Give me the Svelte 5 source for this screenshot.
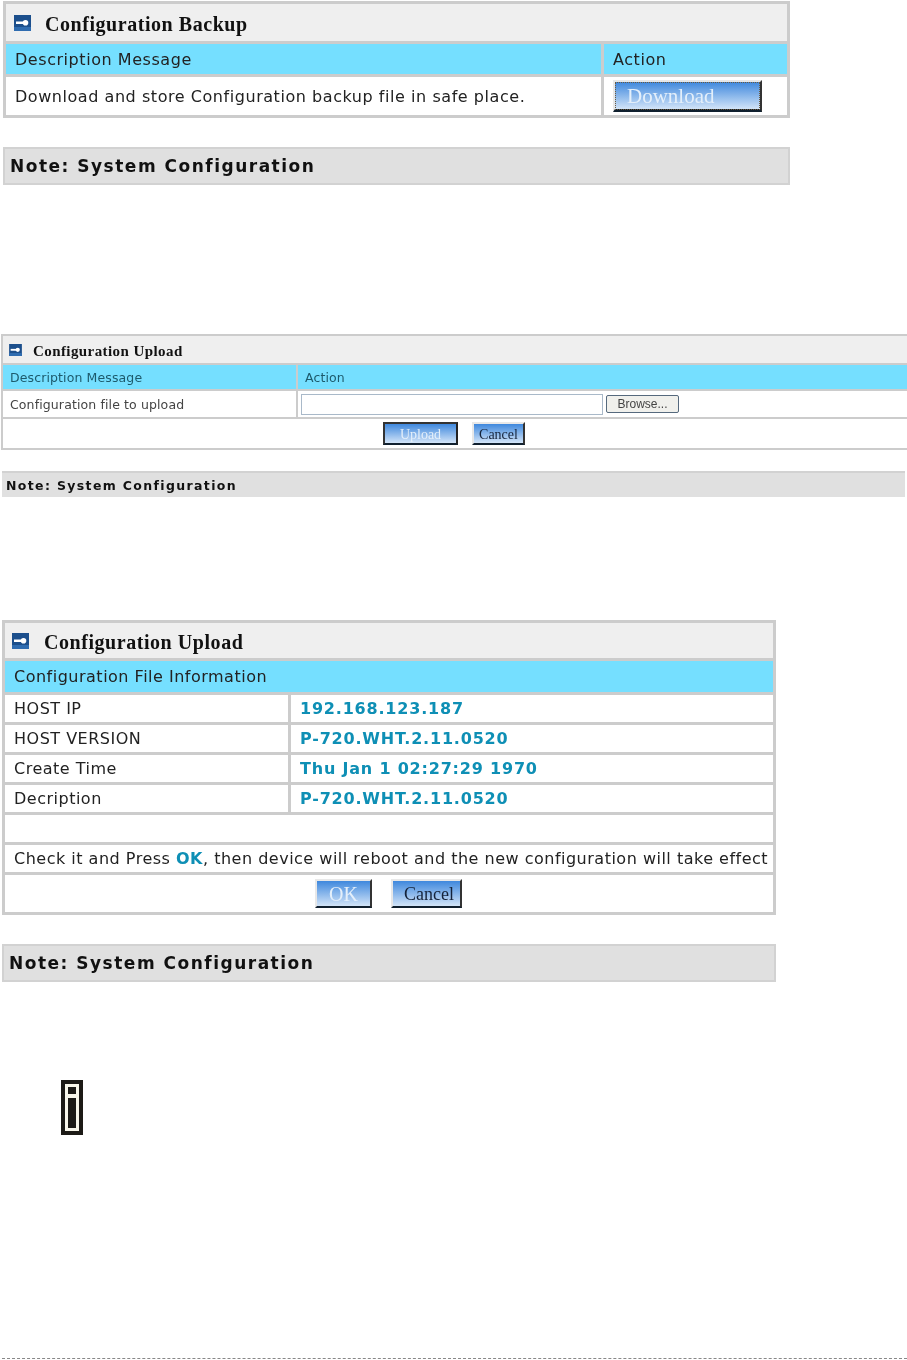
<script>
    const rows = [
        ['HOST IP', '192.168.123.187'],
        ['HOST VERSION', 'P-720.WHT.2.11.0520'],
        ['Create Time', 'Thu Jan 1 02:27:29 1970'],
        ['Decription', 'P-720.WHT.2.11.0520'],
    ];
</script>

{#snippet panelIcon()}
    <svg class="key" viewBox="0 0 17 16" aria-hidden="true">
        <rect width="17" height="16" fill="#1c4f8c"/>
        <rect x="2" y="6.5" width="8" height="2.5" fill="#fff"/>
        <circle cx="11.5" cy="7.7" r="2.8" fill="#fff"/>
        <rect y="12" width="17" height="4" fill="#2f6cb0"/>
    </svg>
{/snippet}

<div class="page">
    <section class="panel backup">
        <div class="title">{@render panelIcon()}<span>Configuration Backup</span></div>
        <div class="split">
            <div class="head">Description Message</div>
            <div class="head">Action</div>
            <div class="cell">Download and store Configuration backup file in safe place.</div>
            <div class="cell"><button class="blue download">Download</button></div>
        </div>
    </section>
    <div class="note backup-note">Note: System Configuration</div>

    <div class="shot">
        <section class="panel upload">
            <div class="title">{@render panelIcon()}<span>Configuration Upload</span></div>
            <div class="split">
                <div class="head">Description Message</div>
                <div class="head">Action</div>
                <div class="cell">Configuration file to upload</div>
                <div class="cell file">
                    <div class="field"></div>
                    <button class="browse">Browse...</button>
                </div>
            </div>
            <div class="actions">
                <button class="blue up">Upload</button>
                <button class="blue can dark">Cancel</button>
            </div>
        </section>
        <div class="note upload-note">Note: System Configuration</div>
    </div>

    <section class="panel info">
        <div class="title">{@render panelIcon()}<span>Configuration Upload</span></div>
        <div class="head wide">Configuration File Information</div>
        <div class="split">
            {#each rows as row}
                <div class="cell">{row[0]}</div>
                <div class="cell val">{row[1]}</div>
            {/each}
        </div>
        <div class="cell blank"></div>
        <div class="cell msg">Check it and Press <b>OK</b>, then device will reboot and the new configuration will take effect</div>
        <div class="actions">
            <button class="blue ok">OK</button>
            <button class="blue can2 dark">Cancel</button>
        </div>
    </section>
    <div class="note info-note">Note: System Configuration</div>

    <svg class="info-icon" viewBox="0 0 22 55" aria-hidden="true">
        <rect x="2" y="2" width="18" height="51" fill="#f8f6ea" stroke="#1c1a16" stroke-width="4"/>
        <rect x="7" y="7" width="8" height="7" fill="#1c1a16"/>
        <rect x="7" y="18" width="8" height="30" fill="#1c1a16"/>
    </svg>

    <div class="rule"></div>
</div>

<style>
:global(body){
    background: #fff;
}
.page{
    height: 1360px;
    padding-top: 1px;
    box-sizing: border-box;
    font-family: "DejaVu Sans", sans-serif;
    color: #222;
    overflow: hidden;
}
.panel{
    display: flex;
    flex-direction: column;
    gap: 3px;
    background: #ccc;
    border: 3px solid #ccc;
    filter: blur(0.3px);
}
.title{
    display: flex;
    align-items: center;
    background: #efefef;
    font-family: "Liberation Serif", serif;
    font-weight: bold;
    color: #111;
    white-space: nowrap;
}
.title span{
    padding-top: 3px;
}
.key{
    flex: none;
    width: 17px;
    height: 16px;
}
.split{
    display: grid;
    gap: 3px;
}
.head{
    background: #75dfff;
    display: flex;
    align-items: center;
}
.cell{
    background: #fff;
    display: flex;
    align-items: center;
    white-space: pre;
}
button{
    padding: 0;
    font-family: "Liberation Serif", serif;
    cursor: pointer;
}
.blue{
    background: linear-gradient(#3f88dd, #d2e4f8);
    border: 2px solid;
    border-color: #e8e8e8 #333 #10202f #e8e8e8;
    color: #e4effa;
    padding-top: 2px;
}
.blue.dark{
    color: #15233a;
}
.note{
    background: #e0e0e0;
    border: 2px solid #d2d2d2;
    font-weight: bold;
    color: #111;
    display: flex;
    align-items: center;
    box-sizing: border-box;
    filter: blur(0.3px);
}

/* first capture */
.backup{
    margin-left: 3px;
    width: 781px;
}
.backup .title{
    height: 37px;
    font-size: 20px;
    letter-spacing: 0.55px;
    padding-left: 8px;
}
.backup .key{
    margin-right: 14px;
}
.backup .split{
    grid-template-columns: 595px 1fr;
    grid-template-rows: 30px 38px;
}
.backup .head, .backup .cell{
    font-size: 16px;
    letter-spacing: 0.55px;
    padding-left: 9px;
}
.backup .blue{
    letter-spacing: 0;
}
.download{
    width: 149px;
    height: 32px;
    font-size: 21px;
    text-align: left;
    padding-left: 12px;
    border-bottom-width: 3px;
    outline: 1px dotted #6a5a40;
    outline-offset: -3px;
}
.backup-note{
    margin: 29px 0 0 3px;
    width: 787px;
    height: 38px;
    font-size: 17px;
    letter-spacing: 1.5px;
    padding-left: 5px;
}

/* second capture, scaled down and softer */
.shot{
    margin-top: 149px;
    filter: blur(0.4px);
}
.upload{
    margin-left: 1px;
    border-width: 2px 0 2px 2px;
    gap: 2px;
}
.upload .title{
    height: 27px;
    font-size: 15px;
    letter-spacing: 0.42px;
    padding-left: 6px;
}
.upload .key{
    width: 13px;
    height: 12px;
    margin-right: 11px;
}
.upload .split{
    grid-template-columns: 293px 1fr;
    grid-template-rows: 24px 26px;
    gap: 2px;
}
.upload .head, .upload .cell{
    font-size: 12.5px;
    letter-spacing: 0.12px;
    padding-left: 7px;
    color: #444;
}
.upload .head{
    color: #1d5a6c;
}
.upload .file{
    gap: 3px;
    padding-left: 3px;
}
.field{
    width: 302px;
    height: 21px;
    box-sizing: border-box;
    border: 1px solid #a9b9c9;
    background: #fff;
}
.browse{
    width: 73px;
    height: 18px;
    font-family: "Liberation Sans", sans-serif;
    font-size: 12px;
    color: #444;
    background: #f0f0ec;
    border: 1px solid #55697d;
    border-radius: 2px;
}
.actions{
    background: #fff;
    display: flex;
    align-items: center;
}
.upload .actions{
    height: 29px;
    padding-left: 380px;
    gap: 14px;
}
.up{
    width: 75px;
    height: 23px;
    font-size: 14px;
    border-color: #333 #222 #10202f #333;
}
.can{
    width: 53px;
    height: 23px;
    font-size: 14px;
}
.upload-note{
    margin: 21px 0 0 2px;
    width: 903px;
    height: 26px;
    border-width: 2px 0 0;
    font-size: 12.5px;
    letter-spacing: 1.35px;
    padding-left: 4px;
}

/* third capture */
.info{
    margin: 123px 0 0 2px;
    width: 768px;
}
.info .title{
    height: 35px;
    font-size: 20px;
    letter-spacing: 0.55px;
    padding-left: 7px;
}
.info .key{
    margin-right: 15px;
}
.info .head, .info .cell{
    font-size: 16px;
    letter-spacing: 0.5px;
    padding-left: 9px;
}
.wide{
    height: 31px;
}
.info .split{
    grid-template-columns: 283px 1fr;
    grid-auto-rows: 27px;
}
.info .val{
    font-weight: bold;
    color: #0e8fb5;
    letter-spacing: 0.8px;
}
.blank, .msg{
    height: 27px;
}
.msg b{
    color: #0e8fb5;
}
.info .actions{
    height: 37px;
    padding-left: 310px;
    gap: 19px;
}
.ok{
    width: 57px;
    height: 29px;
    font-size: 20px;
}
.can2{
    width: 71px;
    height: 29px;
    font-size: 18px;
    padding-left: 5px;
}
.info-note{
    margin: 29px 0 0 2px;
    width: 774px;
    height: 38px;
    font-size: 17px;
    letter-spacing: 1.5px;
    padding-left: 5px;
}

.info-icon{
    display: block;
    width: 22px;
    height: 55px;
    margin: 98px 0 0 61px;
}
.rule{
    margin: 223px 0 0 2px;
    border-top: 1px dashed #888;
}
</style>
